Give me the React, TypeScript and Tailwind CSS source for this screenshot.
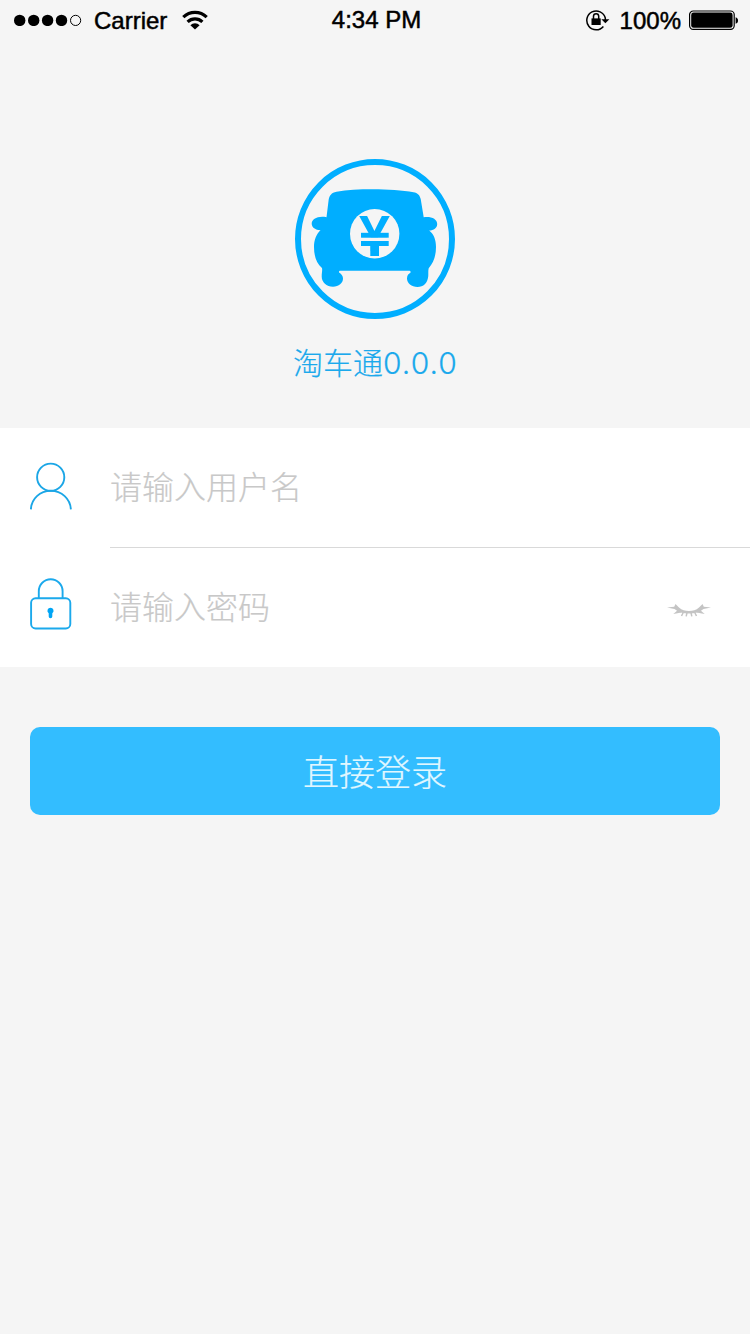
import { useState } from 'react'

const FONT = "font-['Inter','Noto_Sans_CJK_SC',sans-serif]"

function SignalDots() {
  return (
    <svg width="68" height="12" viewBox="0 0 68 12">
      <circle cx="5.7" cy="6.4" r="5.7" />
      <circle cx="19.7" cy="6.4" r="5.7" />
      <circle cx="33.6" cy="6.4" r="5.7" />
      <circle cx="47.5" cy="6.4" r="5.7" />
      <circle cx="61.6" cy="6.4" r="5.1" fill="none" stroke="#000" />
    </svg>
  )
}

function WifiIcon() {
  return (
    <svg width="26" height="20" viewBox="0 0 26 20" fill="none" stroke="#000" strokeWidth="3.2">
      <path d="M1.3 7.2a16.8 16.8 0 0 1 23.4 0" />
      <path d="M5.6 11.8a10.7 10.7 0 0 1 14.8 0" />
      <path d="M8.4 15.2a6.3 6.3 0 0 1 9.2 0L13 19.6Z" fill="#000" stroke="none" />
    </svg>
  )
}

function RotationLockIcon() {
  return (
    <svg width="24" height="22" viewBox="0 0 24 22" fill="none" stroke="#000">
      <path d="M17.4 17.4a9.4 9.4 0 1 1 1.9-8.4V11" strokeWidth="1.5" />
      <path d="M15.4 10.2h8L19.4 14.2Z" fill="#000" stroke="none" />
      <rect x="5.5" y="9.4" width="9.2" height="6.6" fill="#000" stroke="none" />
      <path d="M7.5 10V7.3a2.6 2.6 0 0 1 5.2 0V10" strokeWidth="1.5" />
    </svg>
  )
}

function BatteryIcon() {
  return (
    <svg width="50" height="20" viewBox="0 0 50 20">
      <rect x="0.6" y="1" width="44.6" height="18.4" rx="3.6" fill="none" stroke="#000" strokeWidth="1.2" />
      <rect x="2.2" y="2.6" width="41.4" height="15.2" rx="2.4" />
      <path d="M46.6 7.2c1.6.4 2.4 1.6 2.4 3.3s-.8 2.9-2.4 3.3Z" />
    </svg>
  )
}

function StatusBar() {
  return (
    <div className="grid h-10 grid-cols-[1fr_auto_1fr] items-center pl-3.5 pr-[11px] font-['Liberation_Sans',Arial,sans-serif] text-[24px] leading-none text-black [-webkit-text-stroke:0.5px_#000]">
      <div className="flex items-center">
        <SignalDots />
        <span className="ml-3 mt-0.5">Carrier</span>
        <span className="ml-[15px]"><WifiIcon /></span>
      </div>
      <span>4:34 PM</span>
      <div className="flex items-center justify-end">
        <RotationLockIcon />
        <span className="ml-2.5 mr-2 mt-0.5">100%</span>
        <BatteryIcon />
      </div>
    </div>
  )
}

function Logo() {
  return (
    <svg width="160" height="160" viewBox="0 0 160 160" fill="#00aeff">
      <circle cx="80" cy="80" r="77" fill="none" stroke="#00aeff" strokeWidth="6" />
      {/* car body */}
      <path d="M41.5 32.8C52 30.8 64 30.3 78 30.3s30 1 40.5 2.9c4.200.8 6.300 2.800 7.200 6.800L128.700 58.200c7-1.200 13.500 1.500 13.500 6.800 0 4-3.500 6.300-8 6.600 4.500 3.400 6.800 9.400 6.800 16.400 0 9-2.500 15.600-7.300 21.300C133 112 133.500 115 133.200 117.500 132.500 124 128.500 128 122.500 128c-6 0-10.500-4-10.500-8.500 0-3.200 1.400-4.800 3.400-5.800.6-1.200-.2-2-1.400-2H45.500c-1.200 0-2 .8-1.400 1.800 2.500 1.500 3.900 3.500 3.900 6 0 4.600-4.200 8.200-10 8.200-6.500 0-11.300-4.200-11.300-10.200 0-3.500.8-6 .3-8.500C21.500 104.500 19 97 19 88c0-7 2.300-13 6.500-16.800-5-.2-8.800-2.700-8.800-6.500 0-4.500 6-8.200 14.800-6.500L33.500 42c.7-5.500 3-8.300 8-9.200Z" />
      <circle cx="79.7" cy="74.7" r="24.7" fill="#f5f5f5" />
      <text
        x="64"
        y="92"
        textLength="31"
        lengthAdjust="spacingAndGlyphs"
        className="font-['Liberation_Sans',Arial,sans-serif] text-[50px] font-bold"
      >
        ¥
      </text>
      {/* the sign is split by a thin gap between its two bars */}
      <rect x="66" y="73.8" width="27.700" height="5" />
      <rect x="66" y="82" width="27.700" height="5" />
      <rect x="75.300" y="85" width="8.700" height="12" />
      <rect x="66" y="78.800" width="27.700" height="3.200" fill="#f5f5f5" />
    </svg>
  )
}

function UserIcon() {
  return (
    <svg width="42" height="48" viewBox="0 0 42 48" fill="none" stroke="#1ba6e6" strokeWidth="1.9">
      <circle cx="20.7" cy="15.2" r="13.6" />
      <path d="M.9 47.4C1.3 36.7 10 28.9 20.8 28.9S40.3 36.7 40.9 47.4" />
    </svg>
  )
}

function LockIcon() {
  return (
    <svg width="42" height="52" viewBox="0 0 42 52" fill="none" stroke="#1ba9ec" strokeWidth="1.9">
      <rect x="1.1" y="20.3" width="39.2" height="30.2" rx="4.5" />
      <path d="M8.8 20V13.2a11.9 12 0 0 1 23.8 0V20" />
      <path d="M20.5 29.7a3.1 3.1 0 0 0-1.8 5.6V38.5a1.8 1.8 0 0 0 3.6 0v-3.2a3.1 3.1 0 0 0-1.8-5.6Z" fill="#00a5f5" stroke="none" />
    </svg>
  )
}

function EyeClosedIcon() {
  return (
    <svg width="44" height="14" viewBox="0 0 44 14" fill="#c4c4c4">
      <path d="M0 3.600 7.200 2.800 8.500 0 12 3.400C15 6 18 6.900 22 6.900S29 6 32 3.400L35.500 0 36.800 2.800 44 3.600 36.500 4.900C33 7.900 28 9.400 22 9.400S11 7.900 7.500 4.900Z" />
      <path d="M11.500 5.600 6.300 10 14.500 8.600Z M32.500 5.600 37.700 10 29.500 8.600Z" />
      <path d="M16.500 8 14.500 12M20 8.700 19.200 12.400M24 8.700 24.800 12.400M27.500 8 29.500 12" fill="none" stroke="#c4c4c4" strokeWidth="1.500" />
    </svg>
  )
}

export default function App() {
  const [username, setUsername] = useState('')
  const [password, setPassword] = useState('')
  const [visible, setVisible] = useState(false)

  return (
    <div className={`min-h-screen bg-[#f5f5f5] ${FONT}`}>
      <StatusBar />

      <header className="flex h-[388px] flex-col items-center pt-[119px]">
        <Logo />
        <h1 className="mt-[22px] pl-px text-[30px] font-light leading-[44px] text-[#1ba9ec] [-webkit-text-stroke:0.2px_#1ba9ec]">
          淘车通<span className="tracking-[1.1px]">0.0.0</span>
        </h1>
      </header>

      <form onSubmit={e => e.preventDefault()}>
        <div className="bg-white pl-[30px]">
          <div className="flex h-[120px] items-center">
            <span className="mb-1 w-20 shrink-0"><UserIcon /></span>
            <input
              value={username}
              onChange={e => setUsername(e.target.value)}
              placeholder="请输入用户名"
              className="h-full min-w-0 flex-1 border-b border-[#d9d9d9] text-[32px] font-light outline-none placeholder:text-[#c8c8c8] placeholder:[-webkit-text-stroke:0.2px_#c8c8c8]"
            />
          </div>
          <div className="flex h-[119px] items-center pr-[39px]">
            <span className="mb-2 w-20 shrink-0"><LockIcon /></span>
            <input
              type={visible ? 'text' : 'password'}
              value={password}
              onChange={e => setPassword(e.target.value)}
              placeholder="请输入密码"
              className="h-full min-w-0 flex-1 text-[32px] font-light outline-none placeholder:text-[#c8c8c8] placeholder:[-webkit-text-stroke:0.2px_#c8c8c8]"
            />
            <button type="button" className="pt-1.5" onClick={() => setVisible(!visible)}>
              <EyeClosedIcon />
            </button>
          </div>
        </div>

        <div className="px-[30px] pt-[60px]">
          <button className="h-[88px] w-full rounded-[10px] bg-[#33bdff] pt-[3px] text-[36px] font-light text-[#e0f7ff] [-webkit-text-stroke:0.2px_#e0f7ff]">
            直接登录
          </button>
        </div>
      </form>
    </div>
  )
}
